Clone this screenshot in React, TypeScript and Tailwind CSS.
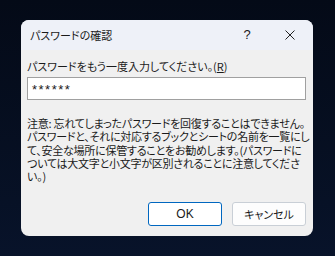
export default function App() {
  const jp = "font-['Meiryo_UI','Noto_Sans_CJK_JP',sans-serif] [font-feature-settings:'palt']";
  return (
    <div className="w-[335px] h-[256px] bg-gradient-to-b from-[#040a17] to-[#08132a] pt-[20px] pl-[21px]">
      <div className={`w-[292px] h-[216px] rounded-[8px] overflow-hidden bg-[#f0f0f0] text-[#1a1a1a] flex flex-col ${jp}`}>
        {/* Title bar */}
        <div className="h-[30px] bg-[#eef1f8] flex items-center pl-[9px] text-[11px]">
          <span className="flex-1 pt-[1px]">パスワードの確認</span>
          <span className="w-[20px] text-center font-['Liberation_Sans',sans-serif] text-[13px] mr-[28px]">?</span>
          <svg width="10" height="10" viewBox="0 0 10 10" className="mr-[18px]">
            <path d="M0.5 0.5 L9.5 9.5 M9.5 0.5 L0.5 9.5" stroke="#222" strokeWidth="1" />
          </svg>
        </div>

        {/* Body */}
        <div className="flex-1 flex flex-col pl-[6px] pr-[7px] pt-[9px] pb-[10px] text-[11px]">
          <div className="leading-[14px] whitespace-nowrap">
            パスワードをもう一度入力してください。(<span className="underline">R</span>)
          </div>
          <div className="mt-[4px] h-[23px] bg-white border border-[#a0a0a0] flex items-center px-[4px] font-['Liberation_Sans',sans-serif] text-[13px] tracking-[1.5px] pt-[3px]">
            ******
          </div>
          <p className="mt-[17px] leading-[13.3px] whitespace-nowrap tracking-[-0.25px]">
            注意: 忘れてしまったパスワードを回復することはできません。
            <br />
            パスワードと、それに対応するブックとシートの名前を一覧にし
            <br />
            て、安全な場所に保管することをお勧めします。(パスワードに
            <br />
            ついては大文字と小文字が区別されることに注意してくださ
            <br />
            い。)
          </p>
          <div className="mt-auto flex justify-end gap-[10px]">
            <button className="w-[74px] h-[24px] rounded-[3px] bg-white border-[1.5px] border-[#0067c0] text-[12px] font-['Liberation_Sans',sans-serif]">
              OK
            </button>
            <button className={`w-[74px] h-[24px] rounded-[3px] bg-[#fdfdfd] border border-[#c9cfd6] text-[11px] ${jp}`}>
              キャンセル
            </button>
          </div>
        </div>
      </div>
    </div>
  );
}
